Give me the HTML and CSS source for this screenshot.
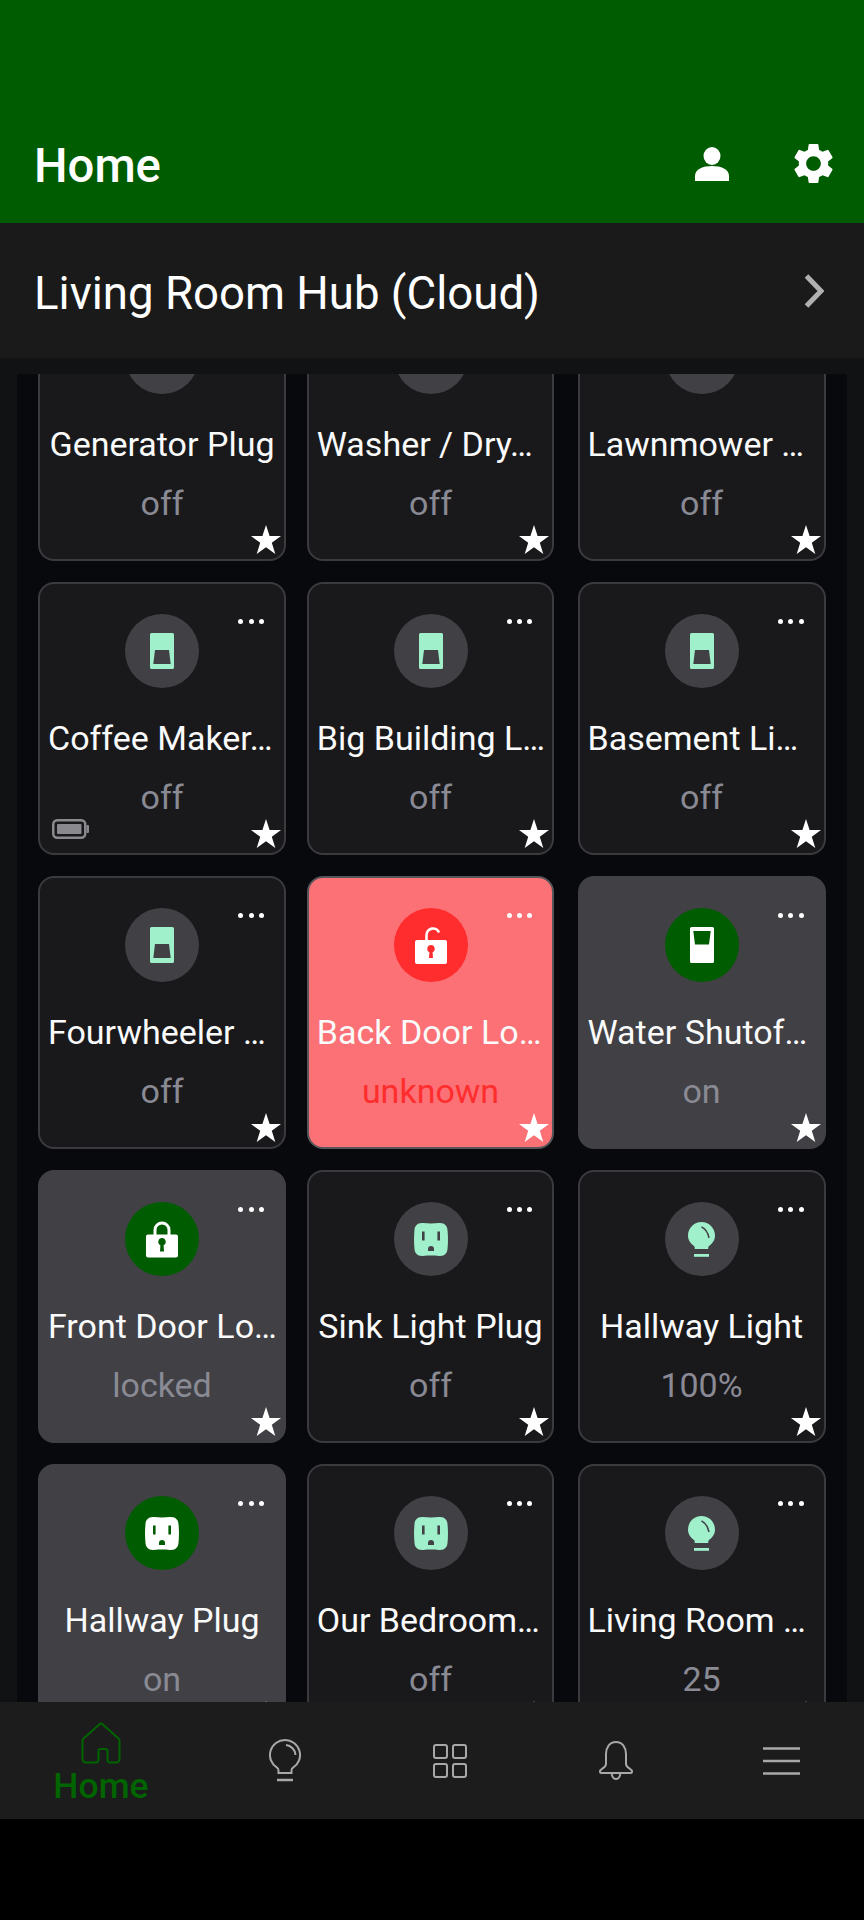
FILE: index.html
```html
<!DOCTYPE html>
<html lang="en">

<head>
	<meta charset="UTF-8">
	<title>Home</title>
	<link rel="stylesheet" href="styles.css">
</head>

<body>
	<!-- shared icons -->
	<svg class="sprite" width="0" height="0">
		<symbol id="i-star" viewBox="0 0 30 29">
			<polygon points="15,0 18.6,10.9 30,10.9 20.8,17.8 24.3,29 15,22.2 5.7,29 9.2,17.8 0,10.9 11.4,10.9" />
		</symbol>
		<symbol id="i-switch-off" viewBox="0 0 24 36">
			<path fill-rule="evenodd" d="M1.500 0h21a1.500 1.500 0 0 1 1.500 1.500v33a1.500 1.500 0 0 1-1.500 1.500h-21A1.500 1.500 0 0 1 0 34.500v-33A1.500 1.500 0 0 1 1.500 0zM5 17l-1.700 14h17.400L19 17z" />
		</symbol>
		<symbol id="i-switch-on" viewBox="0 0 24 36">
			<path fill-rule="evenodd" d="M1.500 0h21a1.500 1.500 0 0 1 1.500 1.500v33a1.500 1.500 0 0 1-1.500 1.500h-21A1.500 1.500 0 0 1 0 34.500v-33A1.500 1.500 0 0 1 1.500 0zM3.300 4L5 17.500h14L20.700 4z" />
		</symbol>
		<symbol id="i-lock" viewBox="0 0 32 36">
			<path d="M9 14V8.500a7 7 0 0 1 14 0V14" fill="none" stroke="currentColor" stroke-width="3" />
			<path fill-rule="evenodd" d="M2 13h28a2 2 0 0 1 2 2v19a2 2 0 0 1-2 2H2a2 2 0 0 1-2-2V15a2 2 0 0 1 2-2zM16 16.500a3.800 3.800 0 0 0-1.600 7.200l-.4 6.300h4l-.4-6.300a3.800 3.800 0 0 0-1.600-7.200z" />
		</symbol>
		<symbol id="i-unlock" viewBox="0 0 32 37">
			<path d="M11.500 14V8a6.500 6.500 0 0 1 12.500-2.500" fill="none" stroke="currentColor" stroke-width="2.600" />
			<path fill-rule="evenodd" d="M2 13h28a2 2 0 0 1 2 2v20a2 2 0 0 1-2 2H2a2 2 0 0 1-2-2V15a2 2 0 0 1 2-2zM16 18a3.800 3.800 0 0 0-1.600 7.200l-.4 5.800h4l-.4-5.800A3.800 3.800 0 0 0 16 18z" />
		</symbol>
		<symbol id="i-plug" viewBox="0 0 34 33">
			<path fill-rule="evenodd" d="M9 0c5 .6 11 .6 16 0 5.500-.2 8.400 2.500 8.600 8 .5 5.500.5 11.500 0 17-.2 5.500-3.100 8.200-8.600 8-5-.6-11-.6-16 0-5.500.2-8.400-2.500-8.600-8-.5-5.500-.5-11.500 0-17C.6 2.500 3.500-.2 9 0zM8 8.500v9h2.600v-9zM23.400 8.500v9H26v-9zM14 28h6v-2a3 3 0 0 0-6 0z" />
		</symbol>
		<symbol id="i-bulb" viewBox="0 0 27 35">
			<path d="M13.500 0C6 0 0 6 0 13.500c0 4.500 2.500 8 6 10.500.6.500.8 1.500.8 3h13.400c0-1.500.2-2.500.8-3 3.500-2.500 6-6 6-10.500C27 6 21 0 13.500 0z" />
			<rect x="6" y="32" width="15" height="2.800" />
			<path d="M13.500 5c3.500 1.500 6.500 6 7.500 11" fill="none" class="bulb-shine" stroke-width="1.500" />
		</symbol>
		<symbol id="i-battery" viewBox="0 0 37 20">
			<rect x="1.250" y="1.250" width="32" height="17.500" rx="4" fill="none" stroke="currentColor" stroke-width="2.500" />
			<rect x="5" y="5" width="24.500" height="10" rx="1" />
			<rect x="34.500" y="6" width="2.500" height="8" rx="1" />
		</symbol>
	</svg>

	<header class="app-bar">
		<h1 class="app-title">Home</h1>
		<svg class="icon-person" viewBox="0 0 34 34" fill="#fff">
			<ellipse cx="17" cy="9" rx="8.500" ry="9" />
			<path d="M0 34v-5c0-7 8-10 17-10s17 3 17 10v5z" />
		</svg>
		<svg class="icon-gear" viewBox="0 0 24 24" fill="#fff">
			<path d="M19.140 12.940c.04-.3.06-.61.06-.94 0-.32-.02-.64-.07-.94l2.030-1.580a.49.49 0 0 0 .12-.61l-1.920-3.320a.488.488 0 0 0-.59-.22l-2.390.96c-.5-.38-1.030-.7-1.620-.94l-.36-2.540a.484.484 0 0 0-.48-.41h-3.840c-.24 0-.43.17-.47.41l-.36 2.540c-.59.24-1.130.57-1.620.94l-2.390-.96c-.22-.08-.47 0-.59.22L2.740 8.870c-.12.21-.08.47.12.61l2.030 1.580c-.05.3-.09.63-.09.94s.02.64.07.94l-2.030 1.580a.49.49 0 0 0-.12.61l1.920 3.320c.12.22.37.29.59.22l2.390-.96c.5.38 1.030.7 1.620.94l.36 2.540c.05.24.24.41.48.41h3.840c.24 0 .44-.17.47-.41l.36-2.540c.59-.24 1.130-.56 1.620-.94l2.390.96c.22.08.47 0 .59-.22l1.920-3.320c.12-.22.07-.47-.12-.61l-2.010-1.580zM12 15.600c-1.980 0-3.600-1.620-3.600-3.600s1.620-3.600 3.600-3.600 3.600 1.620 3.600 3.600-1.620 3.600-3.600 3.600z" />
		</svg>
	</header>

	<div class="hub-bar">
		<span class="hub-name">Living Room Hub (Cloud)</span>
		<svg class="icon-chevron" viewBox="0 0 20 34" fill="none" stroke="#b0b0b0" stroke-width="5">
			<path d="M2.500 2L17 17 2.500 32" />
		</svg>
	</div>
	<div class="hub-gap"></div>

	<main class="scroller">
		<div class="device-grid">
			<div class="card">
				<span class="dots"><i></i><i></i><i></i></span>
				<div class="badge"><svg class="ic-plug"><use href="#i-plug" /></svg></div>
				<div class="name">Generator Plug</div>
				<div class="state">off</div>
				<svg class="star"><use href="#i-star" /></svg>
			</div>
			<div class="card">
				<span class="dots"><i></i><i></i><i></i></span>
				<div class="badge"><svg class="ic-plug"><use href="#i-plug" /></svg></div>
				<div class="name cut">Washer / Dry…</div>
				<div class="state">off</div>
				<svg class="star"><use href="#i-star" /></svg>
			</div>
			<div class="card">
				<span class="dots"><i></i><i></i><i></i></span>
				<div class="badge"><svg class="ic-plug"><use href="#i-plug" /></svg></div>
				<div class="name cut">Lawnmower …</div>
				<div class="state">off</div>
				<svg class="star"><use href="#i-star" /></svg>
			</div>

			<div class="card">
				<span class="dots"><i></i><i></i><i></i></span>
				<div class="badge"><svg class="ic-switch"><use href="#i-switch-off" /></svg></div>
				<div class="name cut">Coffee Maker…</div>
				<div class="state">off</div>
				<svg class="battery"><use href="#i-battery" /></svg>
				<svg class="star"><use href="#i-star" /></svg>
			</div>
			<div class="card">
				<span class="dots"><i></i><i></i><i></i></span>
				<div class="badge"><svg class="ic-switch"><use href="#i-switch-off" /></svg></div>
				<div class="name cut">Big Building L…</div>
				<div class="state">off</div>
				<svg class="star"><use href="#i-star" /></svg>
			</div>
			<div class="card">
				<span class="dots"><i></i><i></i><i></i></span>
				<div class="badge"><svg class="ic-switch"><use href="#i-switch-off" /></svg></div>
				<div class="name cut">Basement Li…</div>
				<div class="state">off</div>
				<svg class="star"><use href="#i-star" /></svg>
			</div>

			<div class="card">
				<span class="dots"><i></i><i></i><i></i></span>
				<div class="badge"><svg class="ic-switch"><use href="#i-switch-off" /></svg></div>
				<div class="name cut">Fourwheeler …</div>
				<div class="state">off</div>
				<svg class="star"><use href="#i-star" /></svg>
			</div>
			<div class="card alert">
				<span class="dots"><i></i><i></i><i></i></span>
				<div class="badge"><svg class="ic-lock"><use href="#i-unlock" /></svg></div>
				<div class="name cut">Back Door Lo…</div>
				<div class="state">unknown</div>
				<svg class="star"><use href="#i-star" /></svg>
			</div>
			<div class="card active">
				<span class="dots"><i></i><i></i><i></i></span>
				<div class="badge"><svg class="ic-switch"><use href="#i-switch-on" /></svg></div>
				<div class="name cut">Water Shutof…</div>
				<div class="state">on</div>
				<svg class="star"><use href="#i-star" /></svg>
			</div>

			<div class="card active">
				<span class="dots"><i></i><i></i><i></i></span>
				<div class="badge"><svg class="ic-lock"><use href="#i-lock" /></svg></div>
				<div class="name cut">Front Door Lo…</div>
				<div class="state">locked</div>
				<svg class="star"><use href="#i-star" /></svg>
			</div>
			<div class="card">
				<span class="dots"><i></i><i></i><i></i></span>
				<div class="badge"><svg class="ic-plug"><use href="#i-plug" /></svg></div>
				<div class="name">Sink Light Plug</div>
				<div class="state">off</div>
				<svg class="star"><use href="#i-star" /></svg>
			</div>
			<div class="card">
				<span class="dots"><i></i><i></i><i></i></span>
				<div class="badge"><svg class="ic-bulb"><use href="#i-bulb" /></svg></div>
				<div class="name">Hallway Light</div>
				<div class="state">100%</div>
				<svg class="star"><use href="#i-star" /></svg>
			</div>

			<div class="card active">
				<span class="dots"><i></i><i></i><i></i></span>
				<div class="badge"><svg class="ic-plug"><use href="#i-plug" /></svg></div>
				<div class="name">Hallway Plug</div>
				<div class="state">on</div>
				<svg class="star"><use href="#i-star" /></svg>
			</div>
			<div class="card">
				<span class="dots"><i></i><i></i><i></i></span>
				<div class="badge"><svg class="ic-plug"><use href="#i-plug" /></svg></div>
				<div class="name cut">Our Bedroom…</div>
				<div class="state">off</div>
				<svg class="star"><use href="#i-star" /></svg>
			</div>
			<div class="card">
				<span class="dots"><i></i><i></i><i></i></span>
				<div class="badge"><svg class="ic-bulb"><use href="#i-bulb" /></svg></div>
				<div class="name cut">Living Room …</div>
				<div class="state">25</div>
				<svg class="star"><use href="#i-star" /></svg>
			</div>
		</div>
	</main>

	<nav class="tabs">
		<div class="tab tab-home">
			<svg class="tab-house" viewBox="0 0 40 42" fill="none" stroke="#006400" stroke-width="2">
				<path d="M18.500 2.300a2 2 0 0 1 3 0L37.500 16.500a3 3 0 0 1 1 2.500V37a3.500 3.500 0 0 1-3.500 3.500h-6a2.500 2.500 0 0 1-2.500-2.500v-9a2 2 0 0 0-2-2h-5a2 2 0 0 0-2 2v9a2.500 2.500 0 0 1-2.500 2.500H5A3.500 3.500 0 0 1 1.500 37V19a3 3 0 0 1 1-2.500z" />
			</svg>
			<span class="tab-label">Home</span>
		</div>
		<div class="tab">
			<svg class="tab-bulb" viewBox="0 0 32 43" fill="none" stroke="#a8a8a8" stroke-width="2">
				<path d="M16 1a15 15 0 0 1 8 27.700c-1 .6-1.500 2-1.500 3V34h-13v-2.300c0-1-.5-2.400-1.500-3A15 15 0 0 1 16 1z" />
				<path d="M8 41h16" stroke-width="2.500" />
				<path d="M17 6a10.500 10.500 0 0 1 9.500 10" />
			</svg>
		</div>
		<div class="tab">
			<svg class="tab-grid" viewBox="0 0 34 34" fill="none" stroke="#a8a8a8" stroke-width="2">
				<rect x="1" y="1" width="13" height="13" rx="2" />
				<rect x="20" y="1" width="13" height="13" rx="2" />
				<rect x="1" y="20" width="13" height="13" rx="2" />
				<rect x="20" y="20" width="13" height="13" rx="2" />
			</svg>
		</div>
		<div class="tab">
			<svg class="tab-bell" viewBox="0 0 36 39" fill="none" stroke="#a8a8a8" stroke-width="2">
				<path d="M18 1C11.500 1 8 6.500 8 13v10c0 4-6 4.500-6 7.500 0 1 .5 1.500 1.500 1.500h29c1 0 1.500-.5 1.500-1.500 0-3-6-3.500-6-7.500V13C28 6.500 24.500 1 18 1z" />
				<path d="M13.500 32c.5 4 2.500 6 4.500 6s4-2 4.500-6" />
			</svg>
		</div>
		<div class="tab">
			<svg class="tab-menu" viewBox="0 0 37 28" fill="none" stroke="#a8a8a8" stroke-width="2.500">
				<path d="M0 1.500h37M0 14h37M0 26.500h37" />
			</svg>
		</div>
	</nav>
	<div class="system-bar"></div>
</body>

</html>
```

FILE: styles.css
```css
* {
	margin: 0;
	padding: 0;
	box-sizing: border-box;
}

body {
	display: flex;
	flex-direction: column;
	height: 1920px;
	overflow: hidden;
	background: #000;
	color: #fff;
	font-family: Roboto, "Noto Sans", sans-serif;
}

.sprite {
	position: absolute;
}

/* top bar */
.app-bar {
	display: flex;
	align-items: center;
	flex: none;
	height: 223px;
	padding: 140px 26px 31px 34px;
	background: #005c00;
}

.app-title {
	flex: 1;
	font-size: 47.300px;
	font-weight: 500;
	line-height: 52px;
}

.icon-person {
	width: 34px;
	height: 34px;
	margin: 0 60px 4px 0;
}

.icon-gear {
	width: 49px;
	height: 49px;
	margin-bottom: 6px;
}

/* hub row */
.hub-bar {
	display: flex;
	align-items: center;
	justify-content: space-between;
	flex: none;
	height: 135px;
	padding: 0 40px 0 34px;
	background: #1a1a1a;
}

.hub-name {
	padding-top: 7px;
	font-size: 45.600px;
	line-height: 52px;
}

.icon-chevron {
	width: 20px;
	height: 34px;
}

.hub-gap {
	flex: none;
	height: 16px;
	background: #111214;
}

/* device list, scrolled a bit */
.scroller {
	flex: 1;
	min-height: 0;
	overflow: hidden;
	border-left: 17px solid #111214;
	border-right: 17px solid #111214;
	background: #08090c;
}

.device-grid {
	display: grid;
	grid-template-columns: repeat(3, 248px);
	gap: 21px 21.750px;
	margin-top: -86px;
	padding: 0 0 0 21px;
}

.card {
	position: relative;
	height: 273px;
	padding-top: 30px;
	border: 2px solid #3a3a3f;
	border-radius: 16px;
	background: #19191c;
	text-align: center;
}

/* the middle column sits a little left of the even spacing */
.card:nth-child(3n+2) {
	margin: 0 1.500px 0 -1px;
}

.card.active {
	border-color: #404045;
	background: #404045;
}

.card.alert {
	border-color: #55555a;
	background: #fb7175;
}

.dots {
	position: absolute;
	top: 35px;
	right: 20px;
	display: flex;
	gap: 5.300px;
}

.dots i {
	width: 5px;
	height: 5px;
	border-radius: 50%;
	background: #fff;
}

.badge {
	display: flex;
	align-items: center;
	justify-content: center;
	width: 74px;
	height: 74px;
	margin: 0 auto;
	border-radius: 50%;
	background: #404045;
	color: #a0f0cc;
	fill: #a0f0cc;
}

.bulb-shine {
	stroke: #404045;
}

.active .badge {
	background: #005c00;
	color: #fff;
	fill: #fff;
}

.alert .badge {
	background: #ff2d2d;
	color: #fff;
	fill: #fff;
}

.ic-switch {
	width: 24px;
	height: 36px;
}

.ic-lock {
	width: 32px;
	height: 37px;
}

.ic-plug {
	width: 34px;
	height: 33px;
}

.ic-bulb {
	width: 27px;
	height: 35px;
}

.name {
	margin-top: 30px;
	font-size: 34px;
	line-height: 40px;
	white-space: nowrap;
	color: #fafafa;
}

/* ellipsized names start at the left of the card */
.name.cut {
	padding-left: 8px;
	text-align: left;
}

.state {
	margin-top: 19px;
	font-size: 34px;
	line-height: 40px;
	color: #8a8a94;
}

.alert .state {
	color: #ff2d2d;
}

.star {
	position: absolute;
	right: 3px;
	bottom: 5px;
	width: 30px;
	height: 29px;
	fill: #fff;
}

.battery {
	position: absolute;
	left: 12px;
	bottom: 14px;
	width: 37px;
	height: 20px;
	color: #8a8a8e;
	fill: #8a8a8e;
}

/* bottom tabs */
.tabs {
	display: grid;
	grid-template-columns: 202px repeat(4, 1fr);
	flex: none;
	height: 117px;
	background: #1c1c1c;
}

.tab {
	display: flex;
	flex-direction: column;
	align-items: center;
	justify-content: center;
}

.tab-home {
	justify-content: flex-start;
	padding-top: 20px;
}

.tab-label {
	margin-top: 4px;
	font-size: 35.500px;
	font-weight: 500;
	line-height: 36px;
	color: #006400;
}

.tab-house {
	width: 40px;
	height: 42px;
}

.tab-bulb {
	width: 32px;
	height: 43px;
}

.tab-grid {
	width: 34px;
	height: 34px;
}

.tab-bell {
	width: 36px;
	height: 39px;
}

.tab-menu {
	width: 37px;
	height: 28px;
}

.system-bar {
	flex: none;
	height: 101px;
	background: #000;
}
```
